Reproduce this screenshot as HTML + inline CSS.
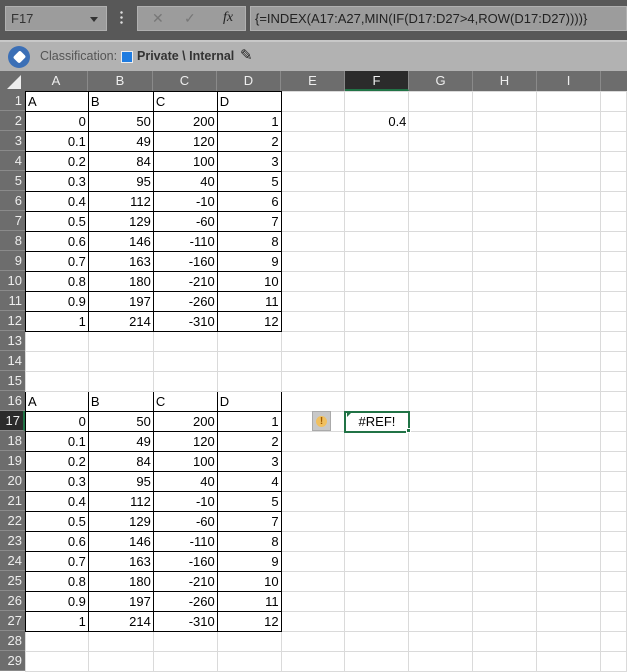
<!DOCTYPE html>
<html><head><meta charset="utf-8"><style>
*{margin:0;padding:0;box-sizing:border-box}
body{width:627px;height:663px;overflow:hidden;background:#fff;font-family:"Liberation Sans",sans-serif;position:relative}
.top{position:absolute;left:0;top:0;width:627px;height:40px;background:#585858}
.nb{position:absolute;left:5px;top:6px;width:102px;height:25px;background:#9c9c9c;border:1px solid #b0b0b0;color:#333;font-size:13px;padding:4px 5px}
.nb:after{content:"";position:absolute;right:8px;top:10px;border:4px solid transparent;border-top:5px solid #333}
.dots{position:absolute;left:120px;top:10px;width:3px;height:15px;background:radial-gradient(circle,#ddd 1px,transparent 1.5px) 0 0/3px 5px}
.fxb{position:absolute;left:137px;top:6px;width:109px;height:25px;background:#9c9c9c;border:1px solid #b0b0b0;color:#777;font-size:14px}
.fm{position:absolute;left:250px;top:6px;width:377px;height:25px;background:#9c9c9c;border:1px solid #b0b0b0;color:#222;font-size:13px;padding:4px 4px;white-space:nowrap}
.cls{position:absolute;left:0;top:40px;width:627px;height:31px;background:#b2b2b2;border-top:2px solid #c8c8c8;font-size:12.5px;color:#555}
.hdr{position:absolute;left:0;top:71px;width:627px;height:20px;background:#6d6d6d}
.h{position:absolute;top:0;height:20px;color:#eee;font-size:13px;text-align:center;line-height:20px;border-right:1px solid #8a8a8a}
.rh{position:absolute;left:0;width:25px;height:20px;background:#6d6d6d;color:#eee;font-size:13px;text-align:right;padding-right:3px;line-height:20px;border-bottom:1px solid #8a8a8a}
table{position:absolute;left:25px;top:91px;border-collapse:collapse;table-layout:fixed}
td{height:20px;border:1px solid #dadada;font-size:13px;padding:0 2px;white-space:nowrap;overflow:hidden;line-height:18px;text-align:right}
td.b{border-color:#000}
td.l{text-align:left}
</style></head><body>
<div class="top">
<div class="nb">F17</div><div class="dots"></div>
<div class="fxb"><span style="position:absolute;left:14px;top:3px">✕</span><span style="position:absolute;left:46px;top:3px">✓</span><i style="position:absolute;left:85px;top:3px;color:#222;font-family:'Liberation Serif',serif">fx</i></div>
<div class="fm">{=INDEX(A17:A27,MIN(IF(D17:D27&gt;4,ROW(D17:D27))))}</div>
</div>
<div class="cls">
<div style="position:absolute;left:8px;top:4px;width:22px;height:22px;border-radius:50%;background:#3b6fb6"><div style="position:absolute;left:7px;top:6px;width:9px;height:10px;background:#fff;border-radius:2px;transform:rotate(45deg)"></div></div>
<span style="position:absolute;left:40px;top:7px">Classification:</span>
<div style="position:absolute;left:121px;top:9px;width:12px;height:12px;background:#1e7be0;border:1px solid #eee"></div>
<span style="position:absolute;left:137px;top:7px;color:#333;font-weight:bold">Private \ Internal</span>
<span style="position:absolute;left:240px;top:4px;color:#222;font-size:15px">✎</span>
</div>
<div class="hdr">
<div style="position:absolute;left:7px;top:4px;width:0;height:0;border-left:14px solid transparent;border-bottom:14px solid #eee"></div>
<div class="h" style="left:25px;width:63px">A</div>
<div class="h" style="left:88px;width:65px">B</div>
<div class="h" style="left:153px;width:64px">C</div>
<div class="h" style="left:217px;width:64px">D</div>
<div class="h" style="left:281px;width:64px">E</div>
<div class="h" style="left:345px;width:64px;background:#2b2b2b;border-bottom:2px solid #217346">F</div>
<div class="h" style="left:409px;width:64px">G</div>
<div class="h" style="left:473px;width:64px">H</div>
<div class="h" style="left:537px;width:64px">I</div>
</div>
<div class="rh" style="top:91px">1</div><div class="rh" style="top:111px">2</div><div class="rh" style="top:131px">3</div><div class="rh" style="top:151px">4</div><div class="rh" style="top:171px">5</div><div class="rh" style="top:191px">6</div><div class="rh" style="top:211px">7</div><div class="rh" style="top:231px">8</div><div class="rh" style="top:251px">9</div><div class="rh" style="top:271px">10</div><div class="rh" style="top:291px">11</div><div class="rh" style="top:311px">12</div><div class="rh" style="top:331px">13</div><div class="rh" style="top:351px">14</div><div class="rh" style="top:371px">15</div><div class="rh" style="top:391px">16</div><div class="rh" style="top:411px;background:#2b2b2b;border-right:2px solid #217346">17</div><div class="rh" style="top:431px">18</div><div class="rh" style="top:451px">19</div><div class="rh" style="top:471px">20</div><div class="rh" style="top:491px">21</div><div class="rh" style="top:511px">22</div><div class="rh" style="top:531px">23</div><div class="rh" style="top:551px">24</div><div class="rh" style="top:571px">25</div><div class="rh" style="top:591px">26</div><div class="rh" style="top:611px">27</div><div class="rh" style="top:631px">28</div><div class="rh" style="top:651px">29</div>
<table>
<colgroup><col style="width:63px"><col style="width:65px"><col style="width:64px"><col style="width:64px"><col style="width:64px"><col style="width:64px"><col style="width:64px"><col style="width:64px"><col style="width:64px"><col style="width:26px"></colgroup>
<tr><td class="b l">A</td><td class="b l">B</td><td class="b l">C</td><td class="b l">D</td><td></td><td></td><td></td><td></td><td></td><td></td></tr>
<tr><td class="b">0</td><td class="b">50</td><td class="b">200</td><td class="b">1</td><td></td><td>0.4</td><td></td><td></td><td></td><td></td></tr>
<tr><td class="b">0.1</td><td class="b">49</td><td class="b">120</td><td class="b">2</td><td></td><td></td><td></td><td></td><td></td><td></td></tr>
<tr><td class="b">0.2</td><td class="b">84</td><td class="b">100</td><td class="b">3</td><td></td><td></td><td></td><td></td><td></td><td></td></tr>
<tr><td class="b">0.3</td><td class="b">95</td><td class="b">40</td><td class="b">5</td><td></td><td></td><td></td><td></td><td></td><td></td></tr>
<tr><td class="b">0.4</td><td class="b">112</td><td class="b">-10</td><td class="b">6</td><td></td><td></td><td></td><td></td><td></td><td></td></tr>
<tr><td class="b">0.5</td><td class="b">129</td><td class="b">-60</td><td class="b">7</td><td></td><td></td><td></td><td></td><td></td><td></td></tr>
<tr><td class="b">0.6</td><td class="b">146</td><td class="b">-110</td><td class="b">8</td><td></td><td></td><td></td><td></td><td></td><td></td></tr>
<tr><td class="b">0.7</td><td class="b">163</td><td class="b">-160</td><td class="b">9</td><td></td><td></td><td></td><td></td><td></td><td></td></tr>
<tr><td class="b">0.8</td><td class="b">180</td><td class="b">-210</td><td class="b">10</td><td></td><td></td><td></td><td></td><td></td><td></td></tr>
<tr><td class="b">0.9</td><td class="b">197</td><td class="b">-260</td><td class="b">11</td><td></td><td></td><td></td><td></td><td></td><td></td></tr>
<tr><td class="b">1</td><td class="b">214</td><td class="b">-310</td><td class="b">12</td><td></td><td></td><td></td><td></td><td></td><td></td></tr>
<tr><td></td><td></td><td></td><td></td><td></td><td></td><td></td><td></td><td></td><td></td></tr>
<tr><td></td><td></td><td></td><td></td><td></td><td></td><td></td><td></td><td></td><td></td></tr>
<tr><td></td><td></td><td></td><td></td><td></td><td></td><td></td><td></td><td></td><td></td></tr>
<tr><td class="b l">A</td><td class="b l">B</td><td class="b l">C</td><td class="b l">D</td><td></td><td></td><td></td><td></td><td></td><td></td></tr>
<tr><td class="b">0</td><td class="b">50</td><td class="b">200</td><td class="b">1</td><td></td><td style="text-align:center;border:2px solid #217346">#REF!</td><td></td><td></td><td></td><td></td></tr>
<tr><td class="b">0.1</td><td class="b">49</td><td class="b">120</td><td class="b">2</td><td></td><td></td><td></td><td></td><td></td><td></td></tr>
<tr><td class="b">0.2</td><td class="b">84</td><td class="b">100</td><td class="b">3</td><td></td><td></td><td></td><td></td><td></td><td></td></tr>
<tr><td class="b">0.3</td><td class="b">95</td><td class="b">40</td><td class="b">4</td><td></td><td></td><td></td><td></td><td></td><td></td></tr>
<tr><td class="b">0.4</td><td class="b">112</td><td class="b">-10</td><td class="b">5</td><td></td><td></td><td></td><td></td><td></td><td></td></tr>
<tr><td class="b">0.5</td><td class="b">129</td><td class="b">-60</td><td class="b">7</td><td></td><td></td><td></td><td></td><td></td><td></td></tr>
<tr><td class="b">0.6</td><td class="b">146</td><td class="b">-110</td><td class="b">8</td><td></td><td></td><td></td><td></td><td></td><td></td></tr>
<tr><td class="b">0.7</td><td class="b">163</td><td class="b">-160</td><td class="b">9</td><td></td><td></td><td></td><td></td><td></td><td></td></tr>
<tr><td class="b">0.8</td><td class="b">180</td><td class="b">-210</td><td class="b">10</td><td></td><td></td><td></td><td></td><td></td><td></td></tr>
<tr><td class="b">0.9</td><td class="b">197</td><td class="b">-260</td><td class="b">11</td><td></td><td></td><td></td><td></td><td></td><td></td></tr>
<tr><td class="b">1</td><td class="b">214</td><td class="b">-310</td><td class="b">12</td><td></td><td></td><td></td><td></td><td></td><td></td></tr>
<tr><td></td><td></td><td></td><td></td><td></td><td></td><td></td><td></td><td></td><td></td></tr>
<tr><td></td><td></td><td></td><td></td><td></td><td></td><td></td><td></td><td></td><td></td></tr>
</table>
<div style="position:absolute;left:312px;top:411px;width:19px;height:20px;background:#c8c8c8;border:1px solid #aaa"><div style="position:absolute;left:3px;top:4px;width:11px;height:11px;border-radius:50%;background:#f0c060;color:#a05a00;font-size:10px;font-weight:bold;text-align:center;line-height:11px">!</div></div>
<div style="position:absolute;left:347px;top:413px;border-top:4px solid #217346;border-right:4px solid transparent"></div>
<div style="position:absolute;left:406px;top:428px;width:5px;height:5px;background:#217346;border:1px solid #fff"></div>
</body></html>
